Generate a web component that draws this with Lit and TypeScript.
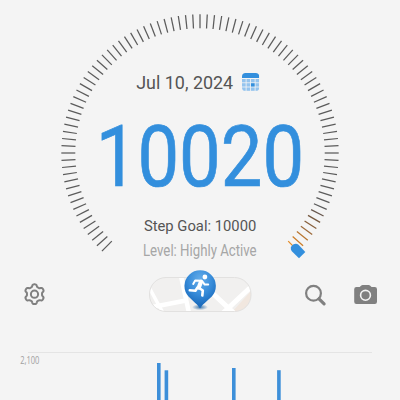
import { LitElement, html, svg, css } from "lit";
import { customElement, property } from "lit/decorators.js";

@customElement("step-dial")
class StepDial extends LitElement {
  @property() date = "";
  @property() steps = "";
  @property() goal = "";
  @property() level = "";

  static styles = css`
    :host { display: block; }
    svg { display: block; }
    text { font-family: Roboto, "Liberation Sans", sans-serif; }
    .tick { stroke-width: 1.25; }
    .date { font-size: 18px; fill: #555; }
    .steps { font-size: 85px; fill: #338fdd; stroke: #338fdd; stroke-width: 0.7; }
    .goal { font-size: 15.2px; fill: #555; }
    .level { font-size: 16px; fill: #a6a6a6; }
    .blue { fill: #338fdd; }
    .cell { fill: #94c4ee; }
  `;

  private ticks() {
    const warm: Record<number, string> = {
      84: "#67574d", 85: "#75583f", 86: "#875f3b", 87: "#9d6a3a", 88: "#b8752f", 89: "#cc7d28", 90: "#e48b26",
    };
    return Array.from({ length: 91 }, (_, i) => svg`
      <line class="tick" x1="200" y1="28.3" x2="200" y2="14.3"
        stroke=${warm[i] ?? "#5b5b5b"} transform="rotate(${-135 + i * 3} 200 153)"></line>`);
  }

  private calendar() {
    const cells = [];
    for (let r = 0; r < 3; r++)
      for (let c = 0; c < 4; c++)
        cells.push(svg`<rect class=${r === 1 && c === 2 ? "blue" : "cell"}
          x=${242 + c * 4.5} y=${79 + r * 4.2} width="3.7" height="3.4"></rect>`);
    return svg`
      <clipPath id="cal"><rect x="242" y="73" width="17.2" height="18" rx="3.6"></rect></clipPath>
      <g clip-path="url(#cal)"><rect class="blue" x="242" y="73" width="17.2" height="5"></rect>${cells}</g>`;
  }

  render() {
    return html`
      <svg width="400" height="266" viewBox="0 0 400 266">
        ${this.ticks()}
        <path class="blue" d="M290.8 247.5Q291.2 245.5 293.6 244.3Q296.5 243.2 298.5 244.8L305.3 252L299 258.2L291.8 251.2Q290.5 249.6 290.8 247.5Z"></path>
        <text class="date" x="136.2" y="89" textLength="97" lengthAdjust="spacingAndGlyphs">${this.date}</text>
        ${this.calendar()}
        <text class="steps" x="95.7" y="186" textLength="208.5" lengthAdjust="spacingAndGlyphs">${this.steps}</text>
        <text class="goal" x="143.9" y="230.7" textLength="112.4" lengthAdjust="spacingAndGlyphs">${this.goal}</text>
        <text class="level" x="143" y="255.7" textLength="113.6" lengthAdjust="spacingAndGlyphs">${this.level}</text>
      </svg>`;
  }
}

@customElement("tool-bar")
class ToolBar extends LitElement {
  static styles = css`
    :host { display: flex; height: 56px; align-items: center; padding-left: 22px; box-sizing: border-box; }
    svg { display: block; flex: none; }
    .map { margin-left: 101px; }
    .search { margin-left: 51px; }
    .camera { margin-left: 26px; }
  `;

  private gear() {
    const pts: string[] = [];
    for (let i = 0; i <= 120; i++) {
      const a = (i / 120) * Math.PI * 2;
      const w = Math.cos(6 * a);
      const r = 8.7 + 1.15 * Math.tanh(2.2 * w) / Math.tanh(2.2);
      pts.push(`${(12.5 + r * Math.sin(a)).toFixed(2)},${(13.2 - r * Math.cos(a)).toFixed(2)}`);
    }
    return svg`<polygon points=${pts.join(" ")} fill="none" stroke="#808080" stroke-width="2" stroke-linejoin="round"></polygon>`;
  }

  render() {
    return html`
      <svg width="25" height="26" viewBox="0 0 25 26">
        ${this.gear()}
        <circle cx="12.5" cy="13.2" r="3.6" fill="none" stroke="#808080" stroke-width="2"></circle>
      </svg>
      <svg class="map" width="104" height="56" viewBox="148 266 104 56">
        <defs>
          <clipPath id="pill"><rect x="149.5" y="277.5" width="101.5" height="34" rx="16.5"></rect></clipPath>
          <radialGradient id="pin" cx="0.5" cy="0.25" r="0.65">
            <stop offset="0" stop-color="#66aeea"></stop>
            <stop offset="0.6" stop-color="#368bd9"></stop>
            <stop offset="1" stop-color="#1c6cbd"></stop>
          </radialGradient>
          <radialGradient id="shade">
            <stop offset="0" stop-color="#2565a0" stop-opacity="0.85"></stop>
            <stop offset="1" stop-color="#2565a0" stop-opacity="0"></stop>
          </radialGradient>
        </defs>
        <g clip-path="url(#pill)">
          <rect x="149" y="277" width="103" height="36" fill="#f1f0ef"></rect>
          <path d="M232 312L252 290V312Z" fill="#f1e7df"></path>
          <g fill="none" stroke="#fff">
            <path d="M150 307.5L186 300.5" stroke-width="4.5"></path>
            <path d="M181 276L189 313" stroke-width="4.5"></path>
            <path d="M150 289L163 313" stroke-width="3.5"></path>
            <path d="M208 289L237 316M222 314L254 284" stroke-width="5"></path>
          </g>
        </g>
        <rect x="149.5" y="277.5" width="101.5" height="34" rx="16.5" fill="none" stroke="#e2e1e0"></rect>
        <ellipse cx="200" cy="307.2" rx="8" ry="3" fill="url(#shade)"></ellipse>
        <path d="M200 308.5C197 303.5 192 300.5 188.5 296.5A15.7 15.7 0 1 1 211.8 296.5C208 300.5 203 303.5 200 308.5Z" fill="url(#pin)"></path>
        <circle cx="204.9" cy="277" r="2.4" fill="#fff"></circle>
        <g fill="none" stroke="#fff" stroke-linecap="round" stroke-linejoin="round">
          <path d="M193.2 284L195.2 280.5L201.5 280.8" stroke-width="2"></path>
          <path d="M201 281.8L198.8 287.6" stroke-width="4.2"></path>
          <path d="M202.5 281.5L204.7 284.6L208.2 284.5" stroke-width="2"></path>
          <path d="M199.2 288L202.8 290.5L202.3 295.5M197.5 287.5L195.4 290.8L189.8 290.3" stroke-width="2.6"></path>
        </g>
      </svg>
      <svg class="search" width="24" height="26" viewBox="303 281 24 26">
        <circle cx="313.5" cy="293.3" r="7.4" fill="none" stroke="#808080" stroke-width="2.2"></circle>
        <path d="M319 298.8L324.1 303.8" stroke="#808080" stroke-width="3.2" stroke-linecap="round"></path>
      </svg>
      <svg class="camera" width="26" height="26" viewBox="353 281 26 26">
        <path d="M356.4 287H359.7L361.3 285.4Q361.8 285 362.5 285H368.9Q369.6 285 370 285.4L371.6 287H374.8Q377 287 377 289.2V301.8Q377 304 374.8 304H356.4Q354.2 304 354.2 301.8V289.2Q354.2 287 356.4 287Z" fill="#808080"></path>
        <circle cx="365.5" cy="295.3" r="4.9" fill="none" stroke="#f4f4f4" stroke-width="1.6"></circle>
      </svg>`;
  }
}

@customElement("step-chart")
class StepChart extends LitElement {
  static styles = css`
    :host { display: block; }
    svg { display: block; }
    .label { font: 10px "Open Sans", "Noto Sans", sans-serif; fill: #a0a0a0; }
    .grid { fill: #e4e4e4; }
    .bar { fill: #3d8fd9; }
  `;

  private bars = [
    { x: 157, top: 363 },
    { x: 164.6, top: 370.3 },
    { x: 232, top: 368 },
    { x: 277.1, top: 370.2 },
  ];

  render() {
    return html`
      <svg width="400" height="78" viewBox="0 322 400 78">
        <rect class="grid" x="28" y="352" width="344" height="1"></rect>
        <text class="label" x="20.2" y="364.2" textLength="19.2" lengthAdjust="spacingAndGlyphs">2,100</text>
        ${this.bars.map((b) => svg`<rect class="bar" x=${b.x} y=${b.top} width="3.6" height=${400 - b.top}></rect>`)}
      </svg>`;
  }
}

@customElement("app-root")
class AppRoot extends LitElement {
  static styles = css`
    :host { display: flex; flex-direction: column; width: 400px; height: 400px; overflow: hidden; background: #f4f4f4; }
  `;

  render() {
    return html`
      <step-dial date="Jul 10, 2024" steps="10020" goal="Step Goal: 10000" level="Level: Highly Active"></step-dial>
      <tool-bar></tool-bar>
      <step-chart></step-chart>`;
  }
}
